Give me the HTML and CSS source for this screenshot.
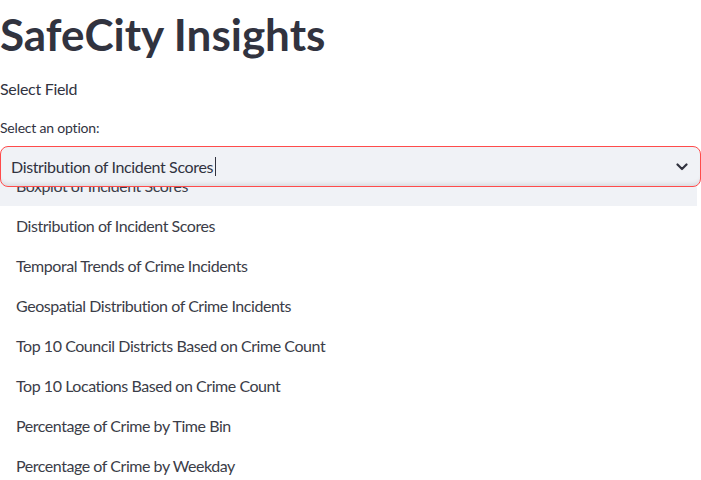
FILE: index.html
```html
<!DOCTYPE html>
<html>
<head>
<meta charset="utf-8">
<link rel="stylesheet" href="styles.css">
</head>
<body>
<main class="page">
  <h1 class="title">SafeCity Insights</h1>
  <p class="field">Select Field</p>
  <div class="selectbox">
    <label class="label">Select an option:</label>
    <div class="control">
      <span class="value">Distribution of Incident Scores</span><span class="caret"></span>
      <svg class="chevron" width="12" height="8" viewBox="0 0 12 8"><path d="M1.5 1.5 L6 6 L10.5 1.5" fill="none" stroke="#31333f" stroke-width="2.2" stroke-linecap="round" stroke-linejoin="round"/></svg>
    </div>
    <ul class="menu">
      <li class="option active">Boxplot of Incident Scores</li>
      <li class="option">Distribution of Incident Scores</li>
      <li class="option">Temporal Trends of Crime Incidents</li>
      <li class="option">Geospatial Distribution of Crime Incidents</li>
      <li class="option">Top 10 Council Districts Based on Crime Count</li>
      <li class="option">Top 10 Locations Based on Crime Count</li>
      <li class="option">Percentage of Crime by Time Bin</li>
      <li class="option">Percentage of Crime by Weekday</li>
    </ul>
  </div>
</main>
</body>
</html>
```
FILE: styles.css
```css
html {
  overflow: hidden;
}
body {
  margin: 0;
  padding: 0;
  background: #ffffff;
  font-family: "Lato", "Liberation Sans", sans-serif;
  color: #31333f;
}
.page {
  width: 701px;
}
.title {
  margin: 0;
  font-size: 44px;
  font-weight: 700;
  line-height: 68px;
  letter-spacing: 0;
}
.field {
  margin: 0;
  font-size: 16px;
  line-height: 42px;
  letter-spacing: -0.3px;
}
.selectbox {
  display: flex;
  flex-direction: column;
}
.label {
  font-size: 14px;
  line-height: 20px;
  height: 36px;
  display: flex;
  align-items: center;
  letter-spacing: -0.2px;
}
.control {
  position: relative;
  z-index: 2;
  box-sizing: border-box;
  height: 41px;
  border: 1px solid #ff4b4b;
  border-radius: 8px;
  background: #f0f2f6;
  box-shadow: inset 0 -5px 4px -3px rgba(0, 0, 0, 0.10);
  display: flex;
  align-items: center;
  padding-left: 10px;
  padding-right: 12px;
  font-size: 16px;
  letter-spacing: -0.35px;
}
.value {
  white-space: nowrap;
}
.caret {
  display: inline-block;
  width: 1px;
  height: 19px;
  background: #31333f;
  margin-left: 2px;
}
.chevron {
  margin-left: auto;
}
.menu {
  position: relative;
  z-index: 1;
  margin: -21px 0 0 0;
  width: 697px;
  padding: 0;
  list-style: none;
  background: #ffffff;
}
.option {
  height: 40px;
  line-height: 40px;
  padding-left: 16px;
  font-size: 16px;
  letter-spacing: -0.45px;
  white-space: nowrap;
  color: #3b3d48;
}
.option.active {
  background: #f0f2f6;
}
```
